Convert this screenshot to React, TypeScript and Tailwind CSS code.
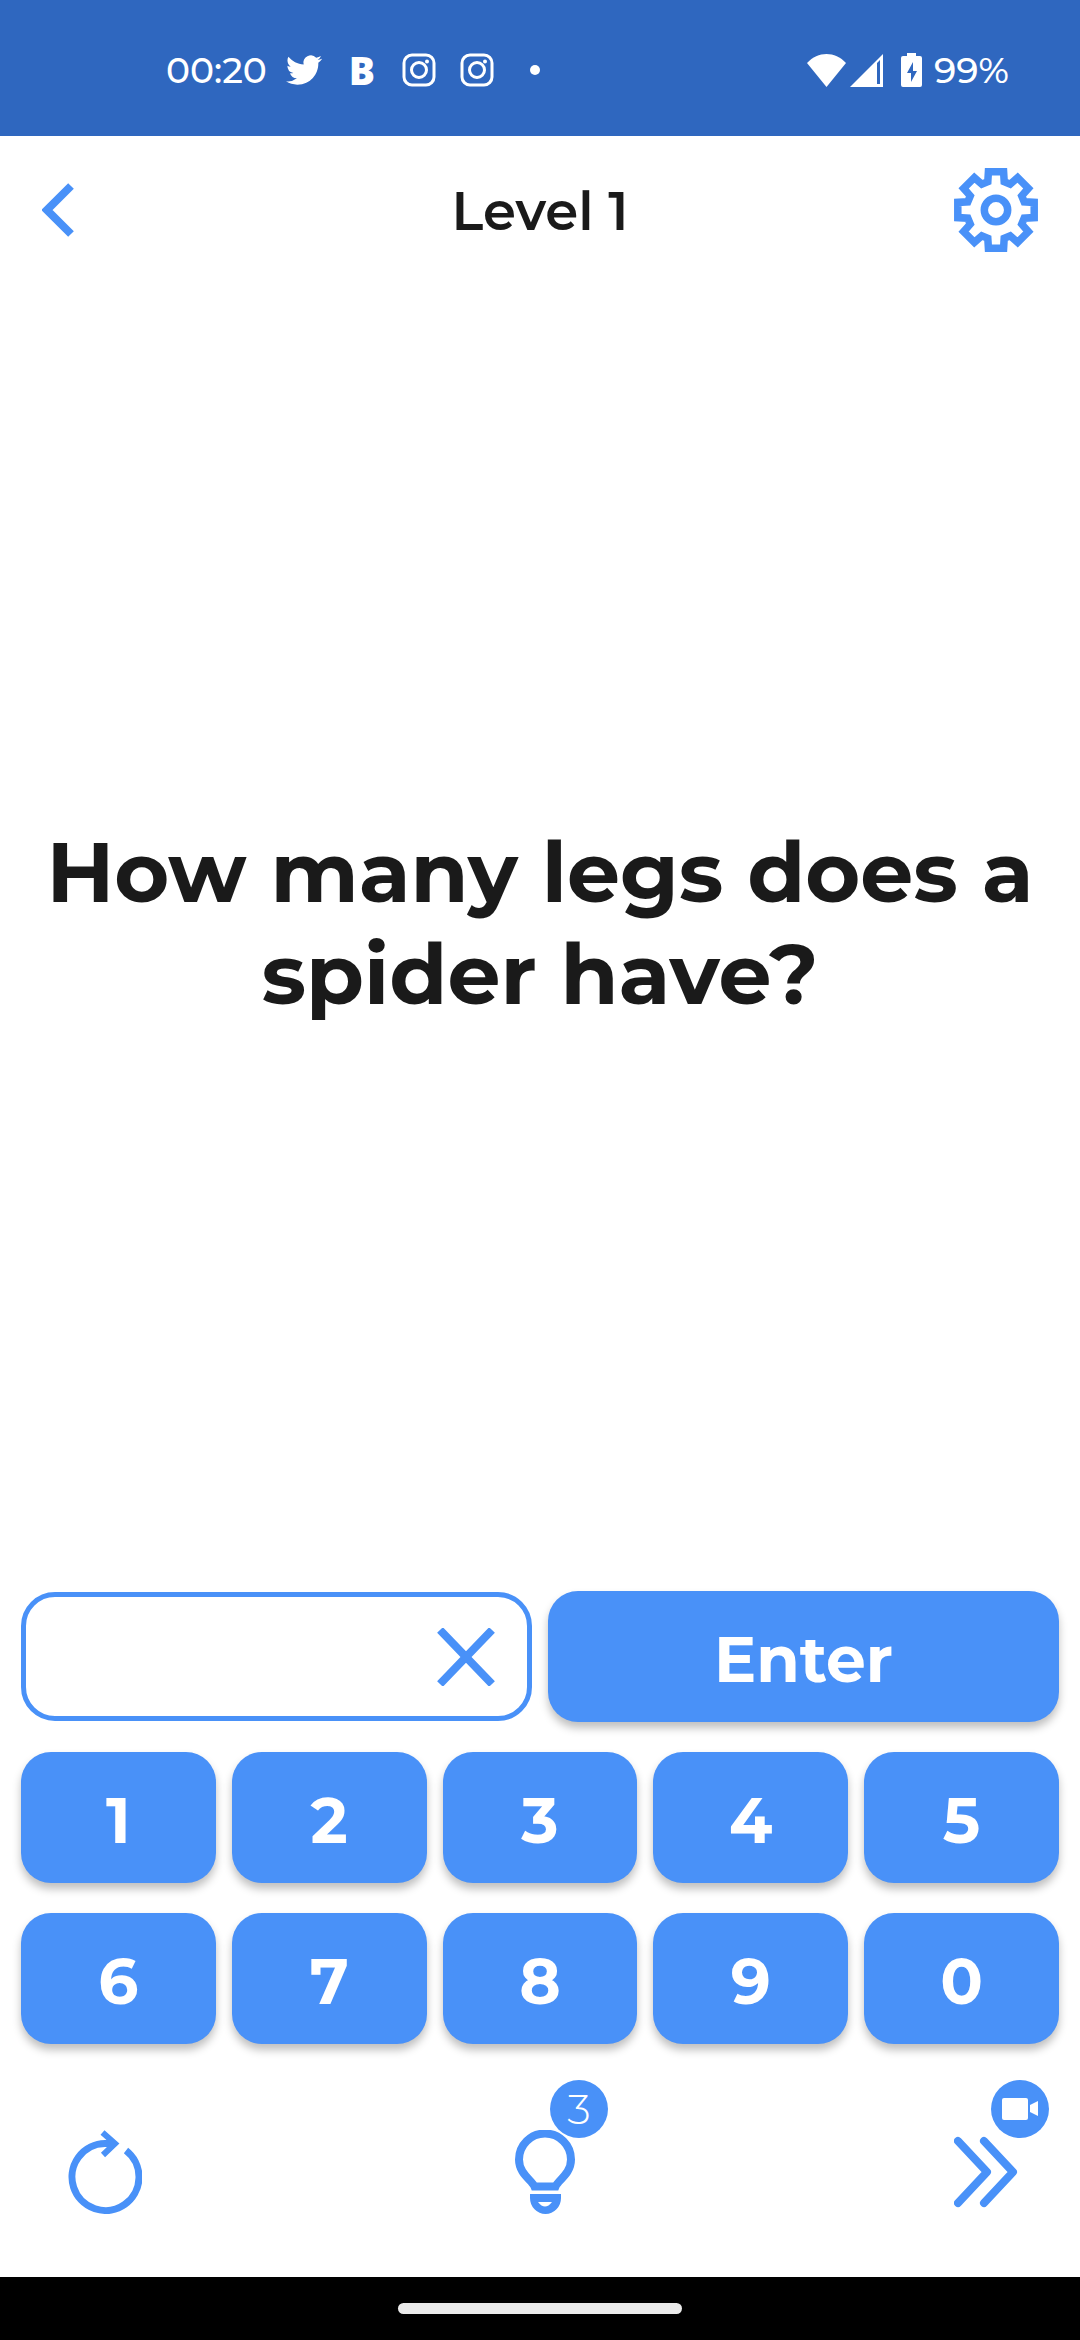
import React, { useState } from "react";

const BLUE = "#4991f8";

function StatusBar() {
  return (
    <div className="flex h-34 items-center bg-[#2f67bf] pl-[166px] pr-[74px] pt-1 text-white">
      <span className="w-[102px] text-[36px] leading-[48px] font-medium whitespace-nowrap">00:20</span>
      <div className="ml-[18px] flex items-center">
        <svg width="36" height="36" viewBox="0 0 24 24" fill="currentColor">
          <path d="M23.95 4.57a10 10 0 0 1-2.82.77 4.96 4.96 0 0 0 2.16-2.72c-.95.55-2 .95-3.13 1.18a4.92 4.92 0 0 0-8.38 4.48C7.69 8.1 4.07 6.13 1.64 3.16a4.82 4.82 0 0 0-.67 2.48c0 1.71.87 3.21 2.19 4.1a4.9 4.9 0 0 1-2.23-.62v.06a4.92 4.92 0 0 0 3.95 4.83 5 5 0 0 1-2.21.08 4.94 4.94 0 0 0 4.6 3.42A9.87 9.87 0 0 1 0 19.54a13.99 13.99 0 0 0 7.55 2.21c9.05 0 14-7.5 14-13.98 0-.21 0-.42-.02-.63a9.94 9.94 0 0 0 2.46-2.55z" />
        </svg>
        <span className="ml-7 flex w-6 justify-center font-['Open_Sans',sans-serif] text-[39px] leading-[48px] font-extrabold">B</span>
        <div className="ml-7 flex gap-6">
          {[0, 1].map((i) => (
            <svg key={i} width="34" height="34" viewBox="0 0 34 34" fill="none" stroke="currentColor" strokeWidth="3">
              <rect x="2" y="2" width="30" height="30" rx="8" />
              <circle cx="17" cy="17" r="7.5" />
              <circle cx="25" cy="8.5" r="2" fill="currentColor" stroke="none" />
            </svg>
          ))}
        </div>
        <span className="ml-9 size-2.5 rounded-full bg-white" />
      </div>
      <div className="ml-auto flex items-center">
        <svg width="39" height="33" viewBox="0 0 39 33" fill="currentColor">
          <path d="M0 9C11-3 28-3 39 9L19.5 33z" />
        </svg>
        <svg className="ml-1" width="33" height="33" viewBox="0 0 33 33" fill="currentColor" fillRule="evenodd">
          <path d="M33 0v33H0zM27 9v21h3V6z" />
        </svg>
        <svg className="ml-[18px]" width="21" height="34" viewBox="0 0 21 34" fill="currentColor" fillRule="evenodd">
          <path d="M6 0h9v3h4q2 0 2 2v27q0 2-2 2H2q-2 0-2-2V5q0-2 2-2h4zM12 9L6 20h4v9l6-11h-4z" />
        </svg>
        <span className="ml-3 w-[72px] text-[36px] leading-[48px] font-medium whitespace-nowrap">99%</span>
      </div>
    </div>
  );
}

// one tooth, turned eight times around the centre
const toothPoints = [0, 1, 2, 3, 4, 5, 6, 7]
  .flatMap((i) => {
    const a = (i * Math.PI) / 4;
    return [
      [-8.2, -28.2],
      [-7.6, -38.2],
      [7.6, -38.2],
      [8.2, -28.2],
    ].map(([x, y]) => `${(x * Math.cos(a) - y * Math.sin(a)).toFixed(2)},${(x * Math.sin(a) + y * Math.cos(a)).toFixed(2)}`);
  })
  .join(" ");

function Header() {
  return (
    <header className="grid grid-cols-[1fr_auto_1fr] items-center px-[42px] py-8">
      <button aria-label="Back" className="justify-self-start">
        <svg width="32" height="54" viewBox="0 0 32 54" fill="none" stroke={BLUE} strokeWidth="8">
          <path d="M29 3L5 27l24 24" />
        </svg>
      </button>
      <h1 className="pt-0.5 text-[53px] leading-[64px] font-semibold">Level 1</h1>
      <button aria-label="Settings" className="justify-self-end">
        <svg width="84" height="84" viewBox="-42 -42 84 84" fill="none" stroke={BLUE} strokeWidth="7.5">
          <polygon points={toothPoints} />
          <circle r="11.7" />
        </svg>
      </button>
    </header>
  );
}

const keyClass =
  "h-[131px] rounded-[30px] bg-[#4991f8] pt-[6px] text-[63px] leading-[80px] font-bold text-white shadow-[0_6px_8px_rgba(0,0,0,0.25)]";

export default function App() {
  const [answer, setAnswer] = useState("");

  return (
    <div className="flex min-h-screen flex-col bg-white font-['Montserrat','Inter',sans-serif] text-[#1a1a1a]">
      <StatusBar />
      <Header />

      <main className="flex flex-1 items-center justify-center px-6 pb-[30px]">
        <p className="text-center text-[84px] leading-[102px] font-bold">How many legs does a spider have?</p>
      </main>

      <section className="grid grid-cols-10 gap-x-4 gap-y-[30px] px-[21px]">
        <div className="col-span-5 my-px flex items-center rounded-[34px] border-5 border-[#4991f8] pr-8">
          <input
            aria-label="Answer"
            inputMode="numeric"
            value={answer}
            onChange={(e) => setAnswer(e.target.value)}
            className="min-w-0 flex-1 px-8 text-[63px] font-bold outline-none"
          />
          <button aria-label="Clear" onClick={() => setAnswer("")}>
            <svg width="58" height="58" viewBox="0 0 58 58" fill="none" stroke={BLUE} strokeWidth="8">
              <path d="M3 2l52 54M55 2L3 56" />
            </svg>
          </button>
        </div>
        <button className={`${keyClass} col-span-5`}>Enter</button>
        {["1", "2", "3", "4", "5", "6", "7", "8", "9", "0"].map((digit) => (
          <button key={digit} onClick={() => setAnswer(answer + digit)} className={`${keyClass} col-span-2`}>
            {digit}
          </button>
        ))}
      </section>

      <footer className="flex items-end justify-between pt-[86px] pr-[62px] pb-[63px] pl-[68px]">
        <button aria-label="Restart">
          <svg width="74" height="84" viewBox="0 0 74 84" fill="none" stroke={BLUE} strokeWidth="7">
            <path d="M44 13.5H37A33.5 33.5 0 1 0 58 20.5" />
            <path d="M34.5 2.5L47 13.5L35 25" strokeWidth="6" />
          </svg>
        </button>
        <button aria-label="Hint" className="relative">
          <svg width="66" height="84" viewBox="0 0 66 84" fill="none">
            <path d="M19.5 56.5C17 50 4 44 4 29.5a26 26 0 0 1 52 0C56 44 43 50 40.5 56.5z" stroke={BLUE} strokeWidth="8" />
            <path fill={BLUE} fillRule="evenodd" d="M15 64h31v4a15.5 16 0 0 1-31 0zM23 72q7 9 14 0z" />
          </svg>
          <span className="absolute -top-[50px] left-[35px] flex size-[58px] items-center justify-center rounded-full bg-[#4991f8] text-[42px] leading-[50px] font-light text-white">
            3
          </span>
        </button>
        <button aria-label="Skip" className="relative">
          <svg width="64" height="84" viewBox="0 0 64 84" fill="none" stroke={BLUE} strokeWidth="8" strokeLinecap="round" strokeLinejoin="round">
            <path d="M4 11l29 31L4 73M30 11l29 31L30 73" />
          </svg>
          <span className="absolute -top-[50px] left-[37px] flex size-[58px] items-center justify-center rounded-full bg-[#4991f8]">
            <svg width="36" height="22" viewBox="0 0 36 22" fill="#fff">
              <rect width="26" height="22" rx="2" />
              <path d="M28 7l8-4v15l-8-4z" />
            </svg>
          </span>
        </button>
      </footer>

      <div className="flex h-[63px] items-center justify-center bg-black">
        <div className="h-[11px] w-[284px] rounded-full bg-[#ebebeb]" />
      </div>
    </div>
  );
}
